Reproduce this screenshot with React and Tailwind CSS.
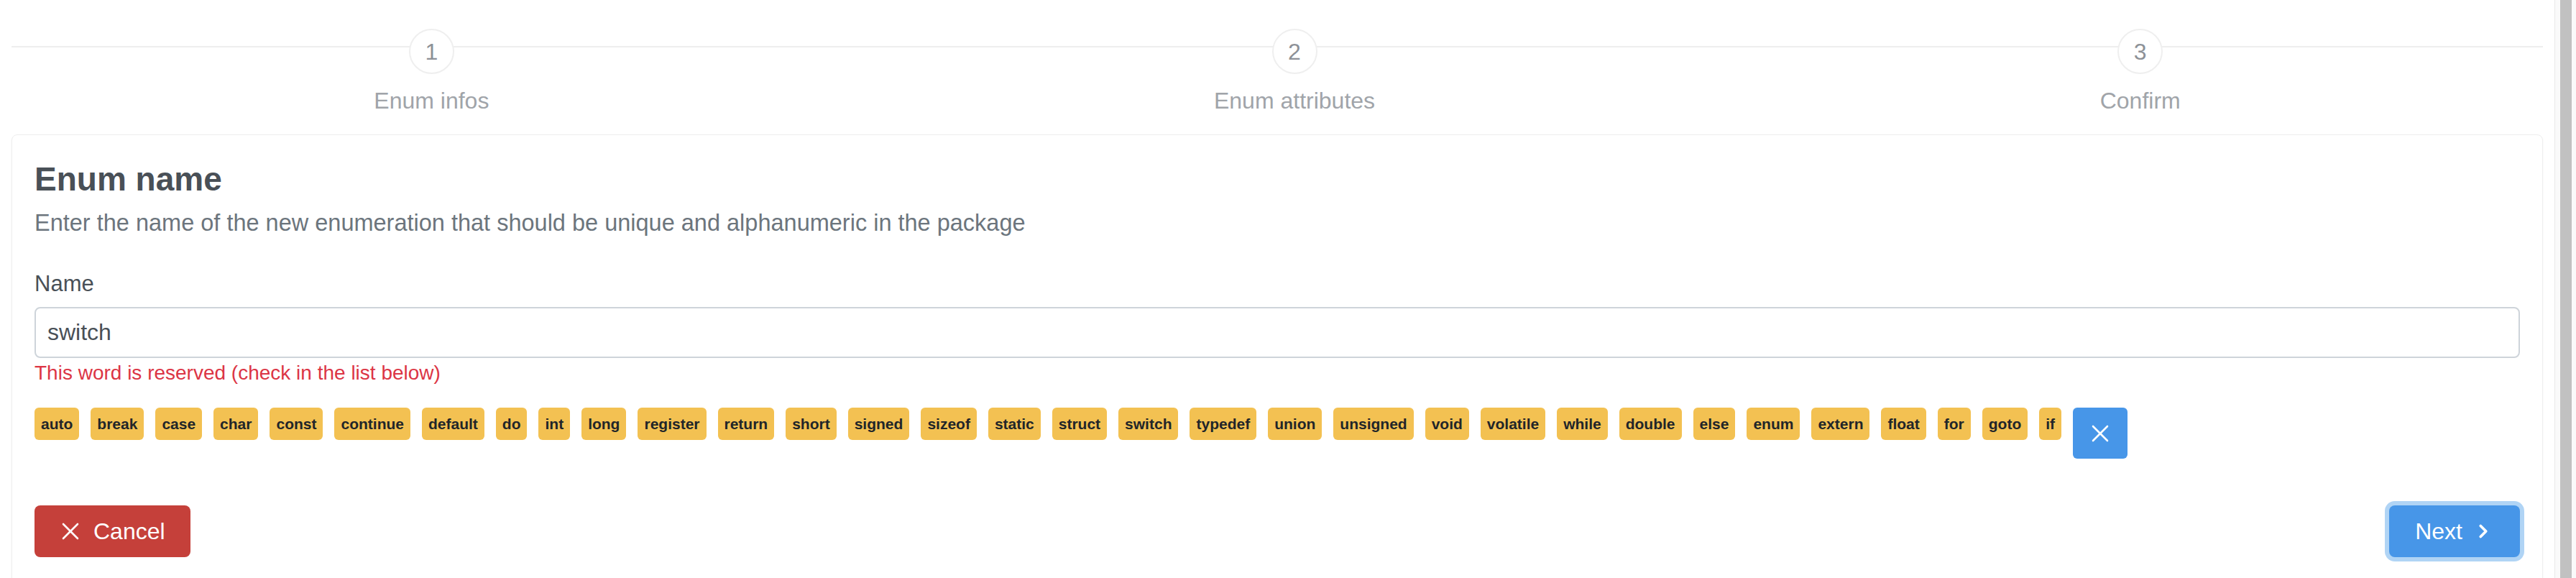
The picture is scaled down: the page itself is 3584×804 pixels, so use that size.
import { ChevronRight } from "lucide-react";

const steps = [
  { n: 1, label: "Enum infos" },
  { n: 2, label: "Enum attributes" },
  { n: 3, label: "Confirm" },
];

const reserved = [
  "auto", "break", "case", "char", "const", "continue", "default", "do", "int",
  "long", "register", "return", "short", "signed", "sizeof", "static", "struct",
  "switch", "typedef", "union", "unsigned", "void", "volatile", "while", "double",
  "else", "enum", "extern", "float", "for", "goto", "if",
];

const Cross = ({ className }) => (
  <svg viewBox="0 0 24 24" className={className} fill="none" stroke="currentColor" strokeWidth="2.6" strokeLinecap="round">
    <line x1="2" y1="2" x2="22" y2="22" />
    <line x1="22" y1="2" x2="2" y2="22" />
  </svg>
);

const App = () => {
  return (
    <div className="flex h-[804px] overflow-hidden bg-white font-['Liberation_Sans',Arial,sans-serif]">
      <div className="flex-1 px-[16px]">

        {/* Stepper */}
        <div className="relative flex pt-[40px]">
          <div className="absolute left-0 right-0 top-[64px] h-[2px] bg-[#eeeeee]" />
          {steps.map((s) => (
            <div key={s.n} className="relative flex flex-auto flex-col items-center">
              <div className="flex h-[63px] w-[63px] items-center justify-center rounded-full border-2 border-[#efefef] bg-white text-[32px] text-[#8d9197]">
                {s.n}
              </div>
              <div className="mt-[18px] text-[32px] leading-[38px] text-[#a0a4a9]">{s.label}</div>
            </div>
          ))}
        </div>

        {/* Card */}
        <div className="mt-[28px] rounded-[8px] border border-[#eeeeee] px-[31px] pt-[33px] pb-[80px] shadow-[0_1px_3px_rgba(0,0,0,0.04)]">
          <h2 className="text-[46px] font-bold leading-[56px] text-[#495057]">Enum name</h2>
          <p className="mt-[11px] text-[32.5px] leading-[45px] text-[#6c757d]">
            Enter the name of the new enumeration that should be unique and alphanumeric in the package
          </p>

          <label className="mt-[39px] block text-[31px] leading-[45px] text-[#495057]">Name</label>
          <input
            type="text"
            defaultValue="switch"
            className="mt-[10px] block h-[71px] w-full rounded-[8px] border-2 border-[#ced4da] bg-white pl-[16px] text-[32px] text-[#495057] outline-none"
          />
          <div className="text-[28px] leading-[42px] text-[#dc3545]">
            This word is reserved (check in the list below)
          </div>

          <div className="mt-[27px] flex flex-wrap items-start gap-[16px]">
            {reserved.map((w) => (
              <span
                key={w}
                className="flex h-[45px] items-center rounded-[6px] bg-[#f3c152] px-[9px] text-[21px] font-bold text-[#212529]"
              >
                {w}
              </span>
            ))}
            <button className="flex h-[71px] w-[76px] items-center justify-center rounded-[6px] bg-[#4796e8] text-white">
              <Cross className="h-[24px] w-[24px]" />
            </button>
          </div>

          <div className="mt-[65px] flex items-center justify-between">
            <button className="flex h-[72px] items-center gap-[20px] rounded-[8px] bg-[#c5403a] pl-[38px] pr-[35px] text-[32px] text-white">
              <Cross className="h-[24px] w-[24px]" />
              Cancel
            </button>
            <button className="flex h-[72px] items-center gap-[14px] rounded-[8px] bg-[#4796e8] pl-[36px] pr-[36px] text-[32px] text-white shadow-[0_0_0_6px_#b0d4f5]">
              Next
              <ChevronRight className="h-[30px] w-[30px]" strokeWidth={3} />
            </button>
          </div>
        </div>
      </div>

      {/* Scrollbar */}
      <div className="flex w-[30px] border-l border-[#e8e8e8] bg-[#fafafa] pl-[7px] pr-[6px]">
        <div className="w-full bg-[#c1c1c1]" />
      </div>
    </div>
  );
};

export default App;
